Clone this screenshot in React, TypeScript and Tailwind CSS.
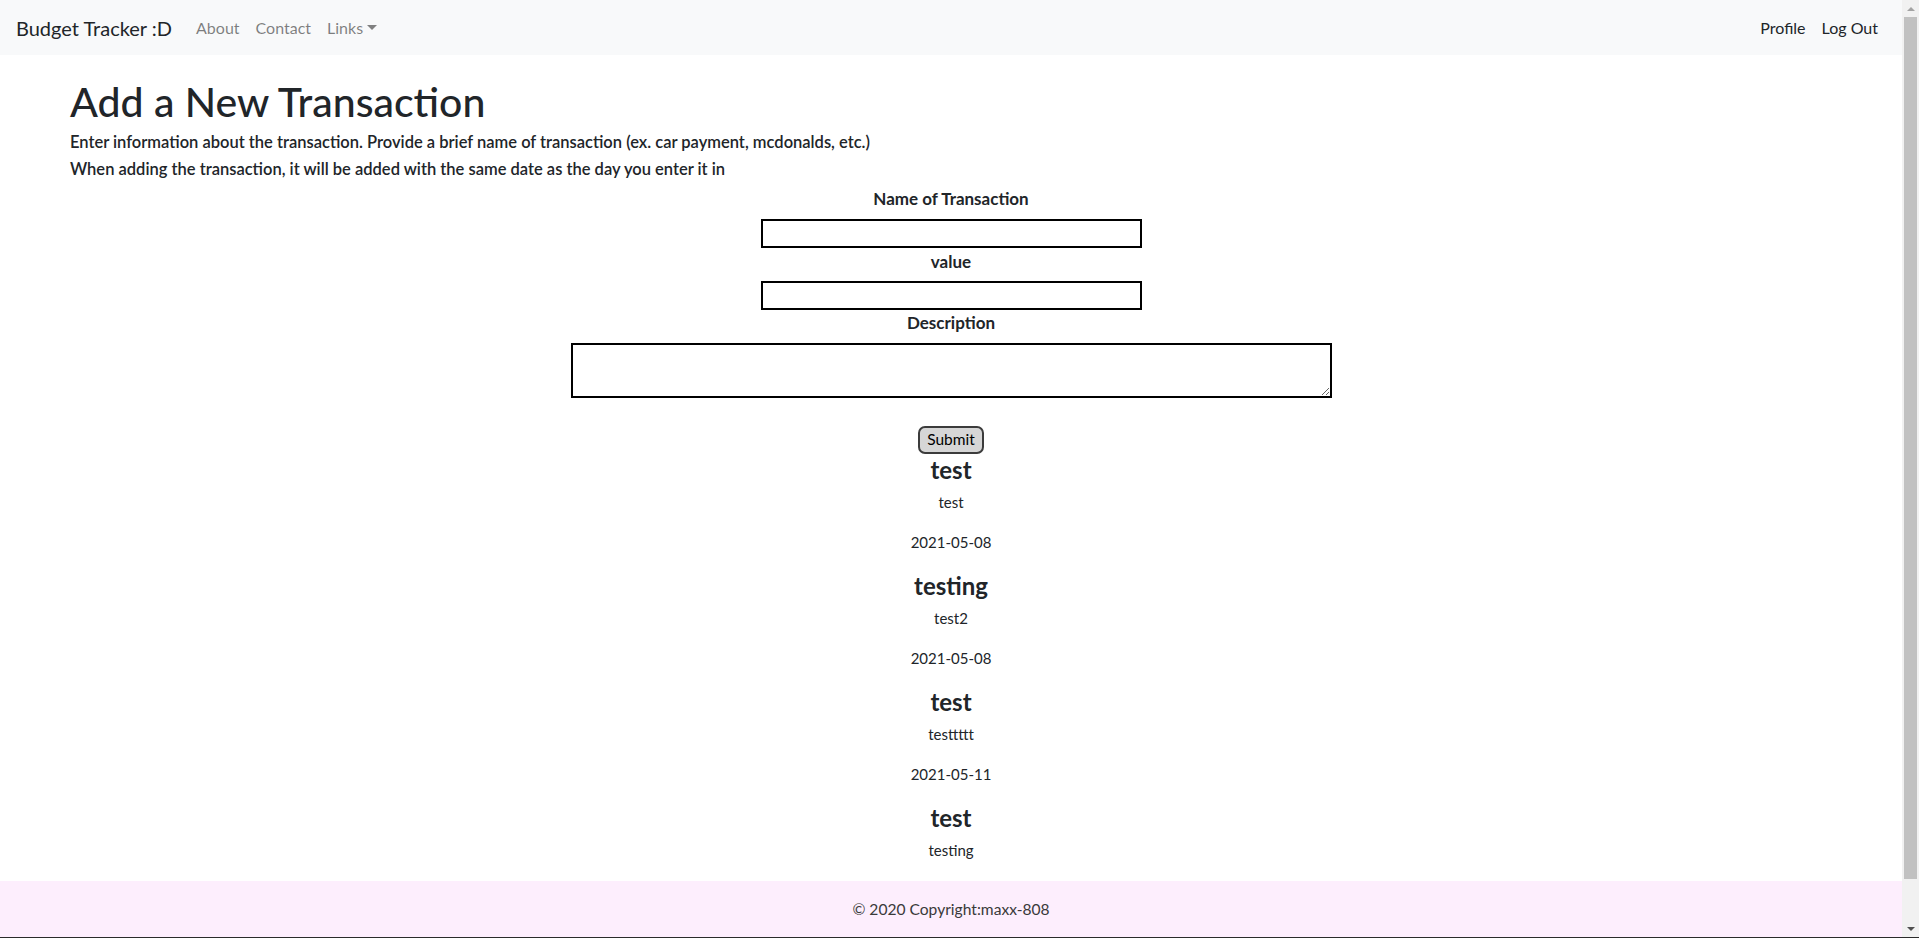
import React from 'react';

const transactions = [
  { id: 1, name: 'test', description: 'test', date: '2021-05-08' },
  { id: 2, name: 'testing', description: 'test2', date: '2021-05-08' },
  { id: 3, name: 'test', description: 'testtttt', date: '2021-05-11' },
  { id: 4, name: 'test', description: 'testing', date: '' },
];

const Navbar: React.FC = () => (
  <nav className="flex h-[55px] shrink-0 items-center bg-[#f8f9fa] px-4">
    <a className="mr-4 text-[20px] text-[#212529]">Budget Tracker :D</a>
    <div className="flex items-center text-base text-black/50">
      <a className="px-2">About</a>
      <a className="px-2">Contact</a>
      <a className="flex items-center px-2">
        Links
        <span className="ml-[4px] inline-block h-0 w-0 border-x-[5px] border-t-[5px] border-x-transparent border-t-[#808080]" />
      </a>
    </div>
    <div className="ml-auto flex items-center text-base text-[#212529]">
      <a className="px-2">Profile</a>
      <a className="px-2">Log Out</a>
    </div>
  </nav>
);

const Scrollbar: React.FC = () => (
  <div className="flex w-[17px] shrink-0 flex-col bg-[#f1f1f1]">
    <div className="flex h-[17px] items-center justify-center">
      <span className="h-0 w-0 border-x-[4px] border-b-[4px] border-x-transparent border-b-[#a3a3a3]" />
    </div>
    <div className="flex-1 px-[2px]">
      <div className="h-[862px] bg-[#c1c1c1]" />
    </div>
    <div className="flex h-[17px] items-center justify-center">
      <span className="h-0 w-0 border-x-[4px] border-t-[4px] border-x-transparent border-t-[#505050]" />
    </div>
  </div>
);

export default function App() {
  return (
    <div className="flex h-[938px] w-full overflow-hidden border-b border-[#2b2b2b] bg-white font-['Lato','Segoe_UI',sans-serif] text-[#212529]">
      <div className="flex min-w-0 flex-1 flex-col">
        <Navbar />

        <main className="min-h-0 flex-1 overflow-hidden px-[70px] pt-[23px]">
          <h1 className="text-[41px] font-medium leading-[48px]">Add a New Transaction</h1>
          <h6 className="mt-[3px] text-[16.5px] font-semibold leading-[27px]">
            Enter information about the transaction. Provide a brief name of transaction (ex. car payment, mcdonalds, etc.)
          </h6>
          <h6 className="text-[16.5px] font-semibold leading-[27px]">
            When adding the transaction, it will be added with the same date as the day you enter it in
          </h6>

          <form className="mt-[4px] flex flex-col items-center" onSubmit={e => e.preventDefault()}>
            <label className="text-[17px] font-bold leading-6">Name of Transaction</label>
            <input className="mt-2 h-[29px] w-[381px] border-2 border-black" />
            <label className="mt-[2px] text-[17px] font-bold leading-6">value</label>
            <input className="mt-[7px] h-[29px] w-[381px] border-2 border-black" />
            <label className="mt-[1px] text-[17px] font-bold leading-6">Description</label>
            <textarea className="mt-2 h-[55px] w-[761px] border-2 border-black" />
            <button
              type="submit"
              className="mt-[28px] h-[28px] w-[66px] rounded-[7px] border-2 border-[#3c3c3c] bg-[#d6d6d6] text-[15.5px] text-black"
            >
              Submit
            </button>
          </form>

          <div className="mt-[1px] flex flex-col items-center">
            {transactions.map(t => (
              <div key={t.id} className="flex flex-col items-center">
                <h4 className="text-2xl font-bold leading-[29px]">{t.name}</h4>
                <p className="mt-[6px] text-[15px] leading-6">{t.description}</p>
                {t.date && <p className="mb-[17px] mt-4 text-[15px] leading-6">{t.date}</p>}
              </div>
            ))}
          </div>
        </main>

        <footer className="flex h-[56px] shrink-0 items-center justify-center bg-[#fdeefd] pt-[2px] text-[15.6px] text-[#3a3a3a]">
          © 2020 Copyright:maxx-808
        </footer>
      </div>
      <Scrollbar />
    </div>
  );
}
